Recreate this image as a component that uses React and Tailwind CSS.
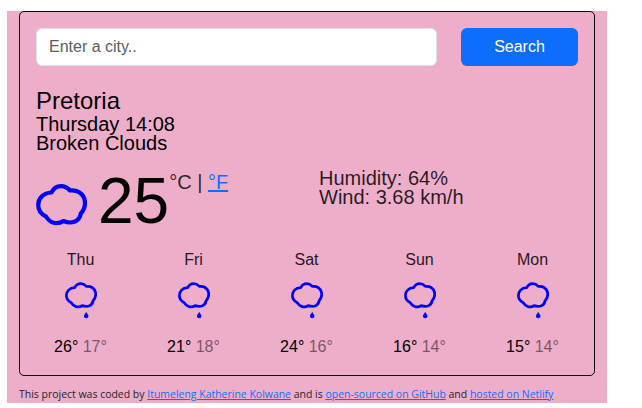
const CLOUD =
  "M15.500 9C17.500 5 21 2.700 25 2.700C28.800 2.700 31.500 4.200 34 7C37.500 6.500 40.500 7 43.200 8.800C46.800 11.200 49 15 49 19.500C49 23 47.500 27 44.800 30C44.300 33.500 42.200 36.500 39 38C35.500 39.500 31.500 39.200 27.400 37.500C24.500 39.500 21 40.200 17.500 39.300C14.500 38.500 12 36.200 10 33C5 30.500 2.200 26.500 2.200 21.500C2.200 15 7 9.300 15.500 9Z";

const days = [
  { name: "Thu", max: 26, min: 17 },
  { name: "Fri", max: 21, min: 18 },
  { name: "Sat", max: 24, min: 16 },
  { name: "Sun", max: 16, min: 14 },
  { name: "Mon", max: 15, min: 14 },
];

function Cloud() {
  return (
    <svg className="mt-[11px] h-[42px] w-[51px] shrink-0" viewBox="0 0.5 51 42" fill="none" stroke="#0000ff" strokeWidth="4.2" strokeLinejoin="round">
      <path d={CLOUD} />
    </svg>
  );
}

function RainCloud() {
  return (
    <svg className="h-[37px] w-8" viewBox="0 0 51 59" fill="none">
      <path d={CLOUD} stroke="#0000ff" strokeWidth="4.4" strokeLinejoin="round" />
      <path d="M33.800 47.500C34.800 50 37.400 52 37.400 54.400C37.400 56.800 35.800 58 33.800 58C31.800 58 30.200 56.800 30.200 54.400C30.200 52 32.800 50 33.800 47.500Z" fill="#0000ff" />
    </svg>
  );
}

export default function App() {
  return (
    <div className="h-[408px] bg-white pt-[11px] pl-[7px] font-['Liberation_Sans',Arial,sans-serif] text-black">
      <div className="h-[392px] w-[600px] bg-[#eeaeca] px-3">
        <div className="h-[365px] w-[576px] rounded-[5px] border border-black p-4">
          <form className="grid grid-cols-[401px_117px] gap-6">
            <input
              type="text"
              placeholder="Enter a city.."
              className="h-[38px] rounded-md border border-[#dee2e6] bg-white px-3 text-base placeholder:text-[#595c5f]"
            />
            <button type="button" className="h-[38px] rounded-md bg-[#0d6efd] text-base text-white">
              Search
            </button>
          </form>
          <h1 className="mt-5 text-2xl leading-[29px]">Pretoria</h1>
          <div className="text-[20px] leading-[19px]">
            <div>Thursday 14:08</div>
            <div>Broken Clouds</div>
          </div>
          <div className="mt-5 grid h-[75px] grid-cols-[283px_1fr]">
            <div className="flex">
              <Cloud />
              <span className="ml-[11px] text-[64px] leading-[56px]">25</span>
              <span className="text-[20px] leading-[19px]">
                <span className="opacity-80">°C |</span> <a className="text-[#0d6efd] underline">°F</a>
              </span>
            </div>
            <div className="-mt-1 text-[20px] leading-[19px] text-black/85">
              <div>Humidity: 64%</div>
              <div>Wind: 3.68 km/h</div>
            </div>
          </div>
          <div className="grid grid-cols-[repeat(5,89px)] gap-6">
            {days.map((day) => (
              <div key={day.name} className="flex flex-col items-center text-base leading-6">
                <span className="opacity-85">{day.name}</span>
                <div className="mt-[10px]">
                  <RainCloud />
                </div>
                <div className="mt-4">
                  {day.max}° <span className="opacity-50">{day.min}°</span>
                </div>
              </div>
            ))}
          </div>
        </div>
        <p className="mt-[10px] font-['Open_Sans','Noto_Sans',sans-serif] text-[10.47px] leading-4 whitespace-nowrap text-[#212529]">
          This project was coded by <a className="text-[#0d6efd] underline">Itumeleng Katherine Kolwane</a> and is{" "}
          <a className="text-[#0d6efd] underline">open-sourced on GitHub</a> and{" "}
          <a className="text-[#0d6efd] underline">hosted on Netlify</a>
        </p>
      </div>
    </div>
  );
}
